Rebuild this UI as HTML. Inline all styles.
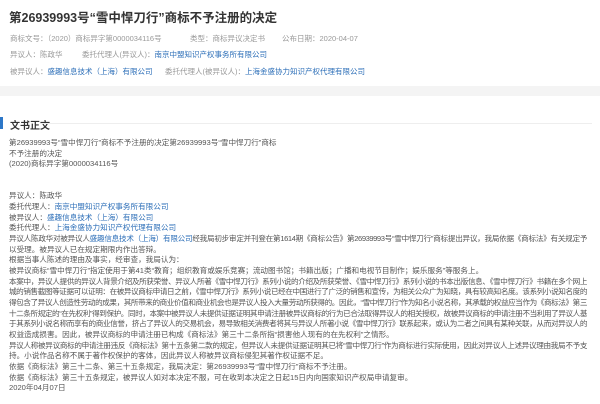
<!DOCTYPE html>
<html><head><meta charset="utf-8"><style>
*{margin:0;padding:0}
body{width:600px;height:404px;background:#fff;font-family:"Liberation Sans","Noto Sans CJK SC",sans-serif;overflow:hidden;position:relative;color:#555}
.a{position:absolute;white-space:nowrap}
.t{left:9px;top:7px;font-size:12.5px;font-weight:bold;color:#333}
.m{font-size:7.5px;color:#999}
.l{color:#2d6fb8}
.band{left:0;top:86px;width:600px;height:10px;background:#f4f4f4}
.bar{left:0;top:117px;width:3px;height:12px;background:#2d77c8}
.h{left:10px;top:117px;font-size:10px;font-weight:bold;color:#333}
.sep{left:40px;top:123px;width:552px;height:1px;background:#eee}
.b{left:9px;top:138px;width:585px;overflow:hidden;font-size:7.6px;line-height:10.67px;color:#555}
.b div{white-space:nowrap}
.b div.j{width:578px;letter-spacing:-0.45px;text-align:justify;text-align-last:justify;white-space:normal;height:10.67px;overflow:hidden}
</style></head><body>
<div class="a t">第26939993号“雪中悍刀行”商标不予注册的决定</div>
<div class="a m" style="left:10px;top:33px">商标文号：（2020）商标异字第0000034116号</div>
<div class="a m" style="left:190px;top:33px">类型：商标异议决定书</div>
<div class="a m" style="left:282px;top:33px">公布日期：2020-04-07</div>
<div class="a m" style="left:10px;top:49px">异议人：陈政华</div>
<div class="a m" style="left:82px;top:49px">委托代理人(异议人)：<span class="l">南京中盟知识产权事务所有限公司</span></div>
<div class="a m" style="left:10px;top:66px">被异议人：<span class="l">盛趣信息技术（上海）有限公司</span></div>
<div class="a m" style="left:165px;top:66px">委托代理人(被异议人)：<span class="l">上海金盛协力知识产权代理有限公司</span></div>
<div class="a band"></div>
<div class="a bar"></div>
<div class="a h">文书正文</div>
<div class="a sep"></div>
<div class="a b">
<div>第26939993号“雪中悍刀行”商标不予注册的决定第26939993号“雪中悍刀行”商标</div>
<div>不予注册的决定</div>
<div>(2020)商标异字第0000034116号</div>
<div>&nbsp;</div>
<div>&nbsp;</div>
<div>异议人：陈政华</div>
<div>委托代理人：<span class="l">南京中盟知识产权事务所有限公司</span></div>
<div>被异议人：<span class="l">盛趣信息技术（上海）有限公司</span></div>
<div>委托代理人：<span class="l">上海金盛协力知识产权代理有限公司</span></div>
<div class="j">异议人陈政华对被异议人<span class="l">盛趣信息技术（上海）有限公司</span>经我局初步审定并刊登在第1614期《商标公告》第26939993号“雪中悍刀行”商标提出异议，我局依据《商标法》有关规定予</div>
<div>以受理。被异议人已在规定期限内作出答辩。</div>
<div>根据当事人陈述的理由及事实，经审查，我局认为：</div>
<div>被异议商标“雪中悍刀行”指定使用于第41类“教育；组织教育或娱乐竞赛；流动图书馆；书籍出版；广播和电视节目制作；娱乐服务”等服务上。</div>
<div class="j">本案中，异议人提供的异议人背景介绍及所获荣誉、异议人所著《雪中悍刀行》系列小说的介绍及所获荣誉、《雪中悍刀行》系列小说的书本出版信息、《雪中悍刀行》书籍在多个网上商</div>
<div class="j">城的销售截图等证据可以证明：在被异议商标申请日之前，《雪中悍刀行》系列小说已经在中国进行了广泛的销售和宣传，为相关公众广为知晓，具有较高知名度。该系列小说知名度的取</div>
<div class="j">得包含了异议人创造性劳动的成果，其所带来的商业价值和商业机会也是异议人投入大量劳动所获得的。因此，“雪中悍刀行”作为知名小说名称，其承载的权益应当作为《商标法》第三</div>
<div class="j">十二条所规定的“在先权利”得到保护。同时，本案中被异议人未提供证据证明其申请注册被异议商标的行为已合法取得异议人的相关授权，故被异议商标的申请注册不当利用了异议人基</div>
<div class="j">于其系列小说名称而享有的商业信誉，挤占了异议人的交易机会，易导致相关消费者将其与异议人所著小说《雪中悍刀行》联系起来，或认为二者之间具有某种关联，从而对异议人的合法</div>
<div>权益造成损害。因此，被异议商标的申请注册已构成《商标法》第三十二条所指“损害他人现有的在先权利”之情形。</div>
<div class="j">异议人称被异议商标的申请注册违反《商标法》第十五条第二款的规定，但异议人未提供证据证明其已将“雪中悍刀行”作为商标进行实际使用，因此对异议人上述异议理由我局不予支</div>
<div>持。小说作品名称不属于著作权保护的客体，因此异议人称被异议商标侵犯其著作权证据不足。</div>
<div>依据《商标法》第三十二条、第三十五条规定，我局决定：第26939993号“雪中悍刀行”商标不予注册。</div>
<div>依据《商标法》第三十五条规定，被异议人如对本决定不服，可在收到本决定之日起15日内向国家知识产权局申请复审。</div>
<div>2020年04月07日</div>
</div>
</body></html>
